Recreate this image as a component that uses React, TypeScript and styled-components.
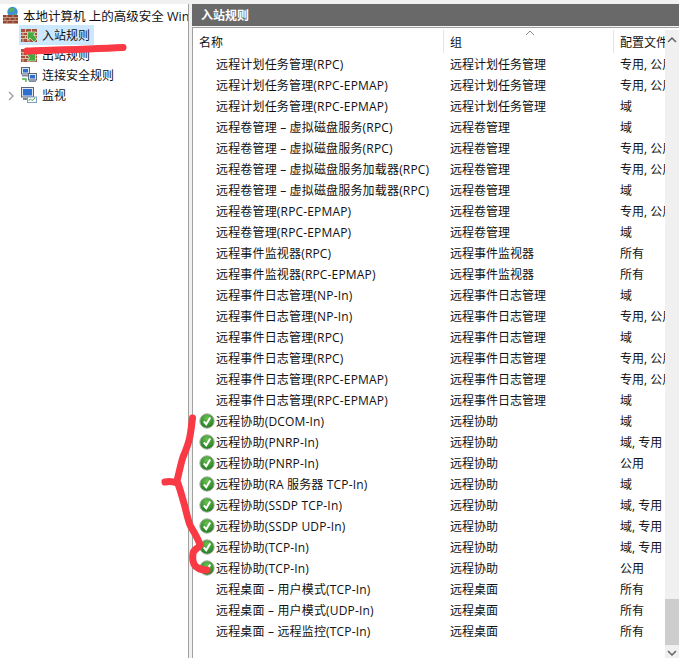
import React from "react";
import styled, { createGlobalStyle } from "styled-components";

const GlobalStyle = createGlobalStyle`
  html, body {
    margin: 0;
    padding: 0;
    background: #fff;
  }
  body {
    font-family: "Open Sans", "Noto Sans CJK SC", sans-serif;
    font-size: 12px;
    color: #111;
  }
  svg {
    flex: none;
  }
`;

const Window = styled.div`
  position: relative;
  width: 679px;
  height: 658px;
  overflow: hidden;
  display: flex;
  flex-direction: column;
  background: #f0f0f0;
`;

const Panes = styled.div`
  flex: 1;
  min-height: 0;
  margin-top: 4px;
  display: flex;
  gap: 3px;
`;

const TreePane = styled.div`
  width: 189px;
  flex: none;
  background: #fff;
  border-right: 1px solid #a0a0a0;
  box-sizing: border-box;
  padding-top: 1px;
  overflow: hidden;
`;

const TreeRoot = styled.div`
  display: flex;
  align-items: center;
  height: 20px;
  padding-left: 3px;
  gap: 4px;
  font-size: 12.5px;
  white-space: nowrap;
  overflow: hidden;
`;

const TreeItem = styled.div<{ $selected?: boolean }>`
  box-sizing: border-box;
  position: relative;
  display: flex;
  align-items: center;
  height: 20px;
  width: ${(p) => (p.$selected ? "75px" : "auto")};
  margin-left: 19px;
  padding-left: 2px;
  gap: 5px;
  font-size: 12px;
  white-space: nowrap;
  background: ${(p) => (p.$selected ? "#cce8ff" : "transparent")};
`;

const Chevron = styled.svg`
  position: absolute;
  left: -12px;
  top: 6px;
`;

const MainPane = styled.div`
  flex: 1;
  min-width: 0;
  display: flex;
  flex-direction: column;
`;

const Banner = styled.div`
  height: 22px;
  flex: none;
  background: #696969;
  color: #fff;
  font-size: 12px;
  font-weight: 600;
  display: flex;
  align-items: center;
  padding-left: 9px;
  border-bottom: 1px solid #f4f4f4;
`;

const ListArea = styled.div`
  flex: 1;
  min-height: 0;
  background: #fff;
  border-top: 1px solid #a0a0a0;
  border-left: 1px solid #a0a0a0;
  display: flex;
`;

const List = styled.div`
  flex: 1;
  min-width: 0;
  overflow: hidden;
`;

const HeaderRow = styled.div`
  display: grid;
  grid-template-columns: 251px 170px 1fr;
  height: 25px;
`;

const HeaderCell = styled.div<{ $last?: boolean }>`
  position: relative;
  display: flex;
  align-items: center;
  padding-left: 6px;
  margin-top: 2px;
  font-size: 12px;
  border-right: ${(p) => (p.$last ? "none" : "1px solid #e5e5e5")};
  overflow: hidden;
  white-space: nowrap;
`;

const SortCaret = styled.svg`
  position: absolute;
  left: 81px;
  top: 0;
`;

const Row = styled.div`
  display: grid;
  grid-template-columns: 251px 170px 1fr;
  height: 21px;
  align-items: center;
`;

const NameCell = styled.div`
  display: flex;
  align-items: center;
  padding-left: 6px;
  gap: 1px;
  white-space: nowrap;
  overflow: hidden;
  letter-spacing: 0.17px;
`;

const IconSlot = styled.span`
  width: 16px;
  height: 16px;
  flex: none;
  display: block;
`;

const Cell = styled.div`
  padding-left: 6px;
  white-space: nowrap;
  overflow: hidden;
`;

const Scrollbar = styled.div`
  width: 14px;
  flex: none;
  margin-top: 2px;
  background: #f0f0f0;
  display: flex;
  flex-direction: column;
  align-items: center;
`;

const ScrollTrack = styled.div`
  flex: 1;
  width: 100%;
  display: flex;
  flex-direction: column;
  justify-content: flex-end;
`;

const ScrollThumb = styled.div`
  height: 46px;
  background: #cdcdcd;
`;

const ScrollArrow = styled.svg<{ $down?: boolean }>`
  display: block;
  margin: ${(p) => (p.$down ? "5px 0 1px" : "6px 0 0")};
`;

const Annotations = styled.svg`
  position: absolute;
  left: 0;
  top: 0;
  pointer-events: none;
`;

const Bricks = () => (
  <>
    <rect x="0" y="2" width="16" height="13" fill="#a4523c" />
    <path
      d="M0 5.500h16M0 8.500h16M0 11.500h16M4.500 2v3.500M10.500 2v3.500M2 5.500v3M8 5.500v3M13.500 5.500v3M4.500 8.500v3M10.500 8.500v3M2 11.500v3.500M8 11.500v3.500"
      stroke="#e2c8b6"
      strokeWidth="0.9"
    />
  </>
);

const FirewallIcon = ({ arrow }: { arrow: "in" | "out" }) => (
  <svg width="16" height="16" viewBox="0 0 16 16">
    <Bricks />
    {arrow === "in" ? (
      <path d="M6.500 5H15l-2.500 2.500L16 12l-3 3-4-4-2.500 2.500z" fill="#45a840" stroke="#d8f0c8" strokeWidth="0.7" />
    ) : (
      <path d="M6 7l3-2.500 3 3L14.500 5v9H6l2.500-3z" fill="#45a840" stroke="#d8f0c8" strokeWidth="0.7" />
    )}
  </svg>
);

const ComputersIcon = () => (
  <svg width="16" height="16" viewBox="0 0 16 16">
    <rect x="0.500" y="0.500" width="8" height="6.500" fill="#dfe6ee" stroke="#56657a" />
    <rect x="2" y="2" width="5" height="3.500" fill="#2f6fd0" />
    <rect x="1" y="8" width="7" height="1.500" fill="#7d8a99" />
    <rect x="7.500" y="6.500" width="8" height="6.500" fill="#dfe6ee" stroke="#56657a" />
    <rect x="9" y="8" width="5" height="3.500" fill="#2f6fd0" />
    <rect x="8" y="13.500" width="7" height="1.500" fill="#7d8a99" />
    <path d="M1 12h4v3" fill="none" stroke="#4fb04a" strokeWidth="1.400" />
  </svg>
);

const MonitorIcon = () => (
  <svg width="16" height="16" viewBox="0 0 16 16">
    <rect x="0.500" y="0.500" width="12" height="9.500" fill="#dfe6ee" stroke="#56657a" />
    <rect x="2" y="2" width="9" height="6.500" fill="#2f6fd0" />
    <rect x="2" y="11" width="9" height="2" fill="#7d8a99" />
    <rect x="6.500" y="10" width="9" height="5.500" fill="#fff" stroke="#7aa0c8" />
    <path d="M7.500 13.500l2-1.500 1.500 1.500 3-2.500" fill="none" stroke="#3fa03c" strokeWidth="1" />
  </svg>
);

const RootIcon = () => (
  <svg width="16" height="18" viewBox="0 0 16 18">
    <circle cx="9.500" cy="6" r="5.200" fill="#3f8fd8" />
    <path d="M6 3c2-1.500 4-1.300 5.500-.5L10.500 5 7.500 6.500zM10.500 8.500l3-1.500-1 3z" fill="#59b34a" />
    <rect x="0" y="9" width="15" height="8.500" fill="#94432f" />
    <path
      d="M0 11.500h15M0 14.500h15M4 9v2.500M10 9v2.500M2 11.500v3M7 11.500v3M12 11.500v3M4 14.500v3M10 14.500v3"
      stroke="#d8b8a6"
      strokeWidth="0.7"
    />
  </svg>
);

const CheckBadge = () => (
  <svg width="16" height="16" viewBox="0 0 16 16">
    <defs>
      <radialGradient id="badgeFill" cx="50%" cy="30%" r="75%">
        <stop offset="0%" stopColor="#6cc052" />
        <stop offset="100%" stopColor="#177518" />
      </radialGradient>
    </defs>
    <circle cx="8" cy="8" r="7.200" fill="url(#badgeFill)" stroke="#a9b0a9" strokeWidth="1" />
    <path d="M4.800 8.300 7.200 11.200 11.200 4.500" fill="none" stroke="#fff" strokeWidth="2" />
  </svg>
);

type Rule = [string, string, string, boolean?];

const rules: Rule[] = [
  ["远程计划任务管理(RPC)", "远程计划任务管理", "专用, 公用"],
  ["远程计划任务管理(RPC-EPMAP)", "远程计划任务管理", "专用, 公用"],
  ["远程计划任务管理(RPC-EPMAP)", "远程计划任务管理", "域"],
  ["远程卷管理 – 虚拟磁盘服务(RPC)", "远程卷管理", "域"],
  ["远程卷管理 – 虚拟磁盘服务(RPC)", "远程卷管理", "专用, 公用"],
  ["远程卷管理 – 虚拟磁盘服务加载器(RPC)", "远程卷管理", "专用, 公用"],
  ["远程卷管理 – 虚拟磁盘服务加载器(RPC)", "远程卷管理", "域"],
  ["远程卷管理(RPC-EPMAP)", "远程卷管理", "专用, 公用"],
  ["远程卷管理(RPC-EPMAP)", "远程卷管理", "域"],
  ["远程事件监视器(RPC)", "远程事件监视器", "所有"],
  ["远程事件监视器(RPC-EPMAP)", "远程事件监视器", "所有"],
  ["远程事件日志管理(NP-In)", "远程事件日志管理", "域"],
  ["远程事件日志管理(NP-In)", "远程事件日志管理", "专用, 公用"],
  ["远程事件日志管理(RPC)", "远程事件日志管理", "域"],
  ["远程事件日志管理(RPC)", "远程事件日志管理", "专用, 公用"],
  ["远程事件日志管理(RPC-EPMAP)", "远程事件日志管理", "专用, 公用"],
  ["远程事件日志管理(RPC-EPMAP)", "远程事件日志管理", "域"],
  ["远程协助(DCOM-In)", "远程协助", "域", true],
  ["远程协助(PNRP-In)", "远程协助", "域, 专用", true],
  ["远程协助(PNRP-In)", "远程协助", "公用", true],
  ["远程协助(RA 服务器 TCP-In)", "远程协助", "域", true],
  ["远程协助(SSDP TCP-In)", "远程协助", "域, 专用", true],
  ["远程协助(SSDP UDP-In)", "远程协助", "域, 专用", true],
  ["远程协助(TCP-In)", "远程协助", "域, 专用", true],
  ["远程协助(TCP-In)", "远程协助", "公用", true],
  ["远程桌面 – 用户模式(TCP-In)", "远程桌面", "所有"],
  ["远程桌面 – 用户模式(UDP-In)", "远程桌面", "所有"],
  ["远程桌面 – 远程监控(TCP-In)", "远程桌面", "所有"],
];

const App = () => (
  <Window>
    <GlobalStyle />
    <Panes>
      <TreePane>
        <TreeRoot>
          <RootIcon />
          本地计算机 上的高级安全 Wind
        </TreeRoot>
        <TreeItem $selected>
          <FirewallIcon arrow="in" />
          入站规则
        </TreeItem>
        <TreeItem>
          <FirewallIcon arrow="out" />
          出站规则
        </TreeItem>
        <TreeItem>
          <ComputersIcon />
          连接安全规则
        </TreeItem>
        <TreeItem>
          <Chevron width="8" height="10" viewBox="0 0 8 10">
            <path d="M2 1l4 4-4 4" fill="none" stroke="#a6a6a6" strokeWidth="1.500" />
          </Chevron>
          <MonitorIcon />
          监视
        </TreeItem>
      </TreePane>
      <MainPane>
        <Banner>入站规则</Banner>
        <ListArea>
          <List>
            <HeaderRow>
              <HeaderCell>名称</HeaderCell>
              <HeaderCell>
                <SortCaret width="10" height="6" viewBox="0 0 10 6">
                  <path d="M1 5l4-4 4 4" fill="none" stroke="#8a8a8a" strokeWidth="1" />
                </SortCaret>
                组
              </HeaderCell>
              <HeaderCell $last>配置文件</HeaderCell>
            </HeaderRow>
            {rules.map(([name, group, profile, enabled], index) => (
              <Row key={index}>
                <NameCell>
                  <IconSlot>{enabled && <CheckBadge />}</IconSlot>
                  {name}
                </NameCell>
                <Cell>{group}</Cell>
                <Cell>{profile}</Cell>
              </Row>
            ))}
          </List>
          <Scrollbar>
            <ScrollArrow width="10" height="7" viewBox="0 0 10 7">
              <path d="M1 6l4-4 4 4" fill="none" stroke="#606060" strokeWidth="1.500" />
            </ScrollArrow>
            <ScrollTrack>
              <ScrollThumb />
            </ScrollTrack>
            <ScrollArrow $down width="10" height="7" viewBox="0 0 10 7">
              <path d="M1 1l4 4 4-4" fill="none" stroke="#606060" strokeWidth="1.500" />
            </ScrollArrow>
          </Scrollbar>
        </ListArea>
      </MainPane>
    </Panes>
    <Annotations width="679" height="658" viewBox="0 0 679 658">
      <path d="M27 51C60 50 95 49 123 47.500" fill="none" stroke="#f93a45" strokeWidth="7" strokeLinecap="round" />
      <path
        d="M192.500 418C191.500 426 191 431 190 436 189 442 186 450 183 457 181 463 179 473 177 481 180 488 183 500 185 507 187 515 188 520 190 525 193 531 198 538 200 545 198 549 193 549 193 554 192 561 194 566 198 568 201 570 204 570 207 570"
        fill="none"
        stroke="#f93a45"
        strokeWidth="7"
        strokeLinecap="round"
        strokeLinejoin="round"
      />
      <path d="M165 482C170 481 174 482 177 483" fill="none" stroke="#f93a45" strokeWidth="7" strokeLinecap="round" />
    </Annotations>
  </Window>
);

export default App;
